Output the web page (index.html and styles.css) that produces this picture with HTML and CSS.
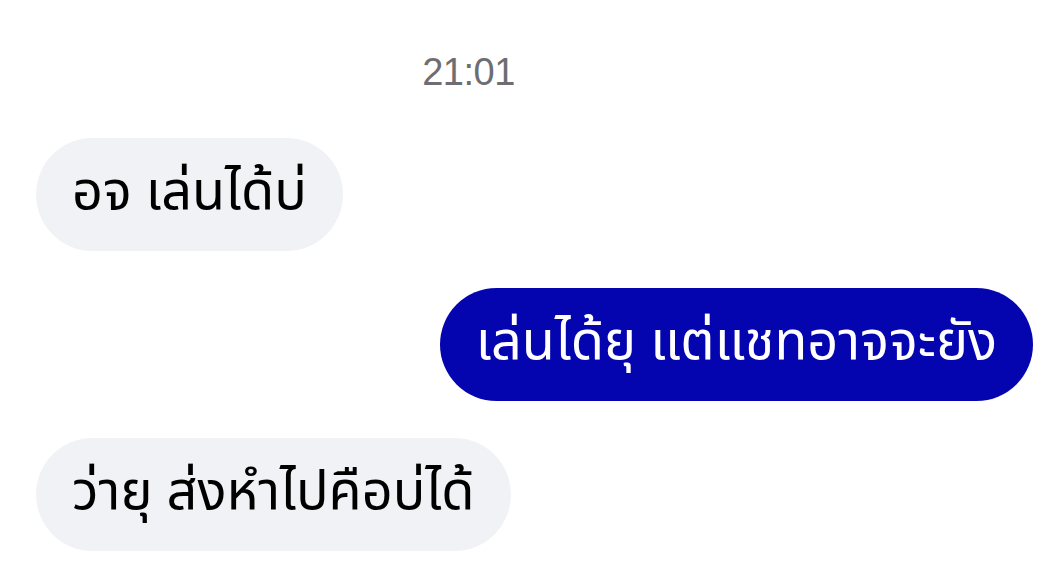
FILE: index.html
```html
<!DOCTYPE html>
<html lang="th">
<head>
<meta charset="utf-8">
<link rel="stylesheet" href="styles.css">
</head>
<body>
<div class="thread">
  <div class="stamp">21:01</div>
  <div class="row in"><div class="bubble">อจ เล่นได้บ่</div></div>
  <div class="row out"><div class="bubble">เล่นได้ยุ แต่แชทอาจจะยัง</div></div>
  <div class="row in"><div class="bubble">ว่ายุ ส่งหำไปคือบ่ได้</div></div>
</div>
</body>
</html>
```
FILE: styles.css
```css
html, body {
  margin: 0;
  background: #ffffff;
}

.thread {
  width: 1041px;
  height: 585px;
  display: flex;
  flex-direction: column;
  gap: 37px;
  padding: 50px 8px 0 36px;
  box-sizing: border-box;
  font-family: "Noto Sans Thai", "Noto Sans", sans-serif;
}

.stamp {
  align-self: center;
  margin-right: 132px;
  font-family: "Liberation Sans", Arial, sans-serif;
  font-size: 38px;
  line-height: 44px;
  letter-spacing: -0.5px;
  color: #6d6d72;
  margin-bottom: 7px;
}

.row {
  display: flex;
}

.row.out {
  justify-content: flex-end;
}

.bubble {
  height: 113px;
  display: flex;
  align-items: center;
  padding: 0 36px 4px;
  border-radius: 57px;
  font-size: 54px;
  line-height: 1;
  box-sizing: border-box;
}

.in .bubble {
  background: #f1f2f6;
  color: #000000;
}

.out .bubble {
  background: #0505b0;
  color: #ffffff;
}
```
